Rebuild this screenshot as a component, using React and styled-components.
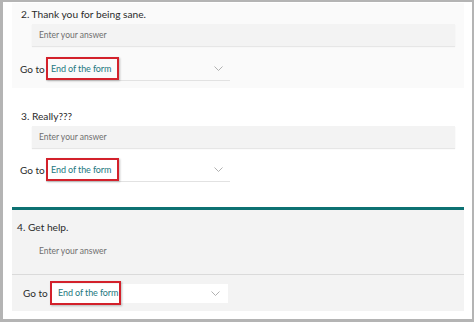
import styled, { createGlobalStyle } from "styled-components"

const GlobalStyle = createGlobalStyle`
  html, body { margin: 0; padding: 0; background: #ffffff; }
  body { font-family: Lato, 'Open Sans', sans-serif; }
`

const Frame = styled.div`
  box-sizing: border-box;
  width: 474px;
  height: 322px;
  border: solid #b4b4b4;
  border-width: 2px 2px 3px 3px;
  padding: 1px 8px 0 9px;
  background: #ffffff;
  display: flex;
  flex-direction: column;
  overflow: hidden;
`

const Question = styled.section`
  display: flex;
  flex-direction: column;
  background: ${p => p.$bg || "#ffffff"};
  border-top: ${p => (p.$active ? "3px solid #0d7172" : "none")};
  padding: ${p => p.$pad};
`

const Title = styled.div`
  height: 16px;
  line-height: 16px;
  font-size: 10.2px;
  color: #2b2b2b;
  padding-left: ${p => p.$indent || 9}px;
  white-space: nowrap;
`

const Answer = styled.div`
  margin: ${p => (p.$flat ? "8px 9px 0 20px" : "2px 9px 0 20px")};
  height: ${p => (p.$flat ? "16px" : "22px")};
  box-sizing: border-box;
  background: ${p => (p.$flat ? "transparent" : "#f3f3f3")};
  box-shadow: ${p => (p.$flat ? "none" : "0 1px 1px #e6e6e6")};
  display: flex;
  align-items: center;
  padding-left: 7px;
  font-size: 8.5px;
  color: #6f6f6f;
`

const Divider = styled.div`
  height: 1px;
  background: #dadada;
  margin-top: ${p => p.$top}px;
`

const GoRow = styled.div`
  display: flex;
  align-items: center;
  height: 24px;
  margin-top: ${p => p.$top}px;
  padding-left: ${p => p.$indent}px;
`

const GoLabel = styled.span`
  width: ${p => p.$w}px;
  font-size: 10px;
  color: #2b2b2b;
  white-space: nowrap;
`

const Dropdown = styled.div`
  box-sizing: border-box;
  width: ${p => (p.$boxed ? "178px" : "184px")};
  height: ${p => (p.$boxed ? "19px" : "24px")};
  display: flex;
  align-items: center;
  justify-content: space-between;
  padding-right: ${p => (p.$boxed ? "8px" : "7px")};
  background: ${p => (p.$boxed ? "#ffffff" : "transparent")};
  border-bottom: ${p => (p.$boxed ? "none" : "1px solid #e2e2e2")};
`

const Value = styled.span`
  box-sizing: border-box;
  height: ${p => (p.$boxed ? "24px" : "23px")};
  width: ${p => (p.$boxed ? "71px" : "73px")};
  margin: ${p => (p.$boxed ? "-3px 0 -2px 0" : "0 0 1px 0")};
  padding-left: ${p => (p.$boxed ? "6px" : "3px")};
  display: flex;
  align-items: center;
  border: 2px solid #d3212b;
  box-shadow: 1px 1px 2px rgba(0, 0, 0, 0.25);
  font-size: 9px;
  letter-spacing: -0.1px;
  color: #1d7880;
  white-space: nowrap;
`

const Chevron = () => (
  <svg width="9" height="5" viewBox="0 0 9 5">
    <polyline points="0.5,0.5 4.5,4.5 8.5,0.5" fill="none" stroke="#a8a8a8" strokeWidth="0.9" />
  </svg>
)

const Goto = ({ top, indent, labelW, boxed }) => (
  <GoRow $top={top} $indent={indent}>
    <GoLabel $w={labelW}>Go to</GoLabel>
    <Dropdown $boxed={boxed}>
      <Value $boxed={boxed}>End of the form</Value>
      <Chevron />
    </Dropdown>
  </GoRow>
)

export default function App() {
  return (
    <>
      <GlobalStyle />
      <Frame>
        <Question $bg="#fafafa" $pad="3px 0 7px 0">
          <Title>2. Thank you for being sane.</Title>
          <Answer>Enter your answer</Answer>
          <Goto top={11} indent={8} labelW={26} />
        </Question>
        <Question $pad="20px 0 25px 0">
          <Title>3. Really???</Title>
          <Answer>Enter your answer</Answer>
          <Goto top={10} indent={8} labelW={26} />
        </Question>
        <Question $active $bg="#f3f3f3" $pad="9px 0 6px 0">
          <Title $indent={5}>4. Get help.</Title>
          <Answer $flat>Enter your answer</Answer>
          <Divider $top={15} />
          <Goto top={6} indent={11} labelW={27} boxed />
        </Question>
      </Frame>
    </>
  )
}
